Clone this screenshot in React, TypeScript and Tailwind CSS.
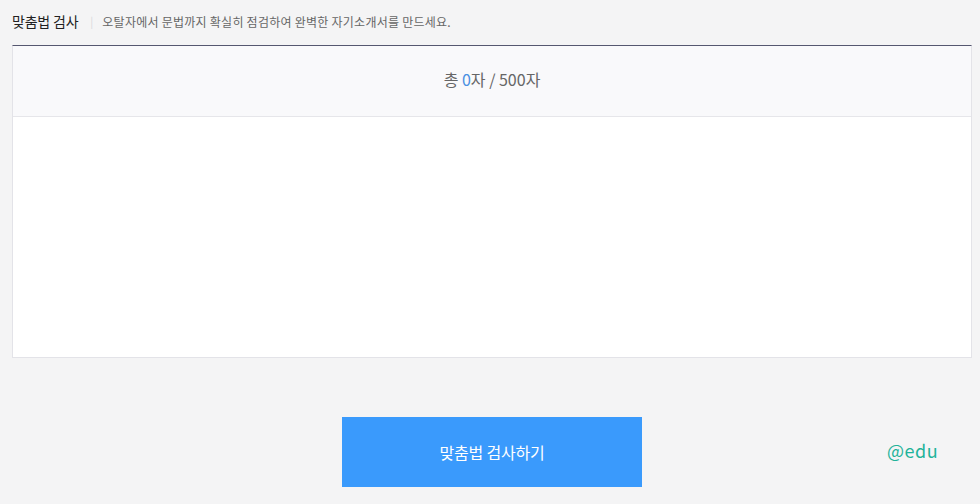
const font = { fontFamily: '"Noto Sans CJK KR", "Noto Sans", sans-serif' };

export default function App() {
  return (
    <div className="w-[980px] h-[504px] bg-[#f4f4f5] overflow-hidden" style={font}>
      {/* Title row */}
      <div className="flex items-center h-[45px] pl-[12px] pb-[2px]">
        <span className="text-[14px] text-[#222] tracking-[-0.2px]">맞춤법 검사</span>
        <span className="ml-[12px] mr-[9px] text-[11px] text-[#d8d8dc]">|</span>
        <span className="text-[12px] text-[#666] tracking-[0.25px]">
          오탈자에서 문법까지 확실히 점검하여 완벽한 자기소개서를 만드세요.
        </span>
      </div>

      {/* Editor box */}
      <div className="ml-[12px] w-[960px] border-t border-t-[#555770] border-x border-b border-x-[#e3e3e8] border-b-[#e3e3e8]">
        <div className="h-[71px] bg-[#f9f9fb] border-b border-[#e6e6ea] flex items-center justify-center">
          <span className="text-[16px] text-[#666] pb-[5px]">
            총 <span className="text-[#4a90e2]">0</span>자 / 500자
          </span>
        </div>
        <textarea className="block w-full h-[240px] bg-white resize-none outline-none p-4 text-[14px]" />
      </div>

      {/* Actions */}
      <div className="relative mt-[59px] flex justify-center pl-[4px]">
        <button className="w-[300px] h-[70px] bg-[#3a9afc] text-white text-[16px] tracking-[-0.2px]">
          맞춤법 검사하기
        </button>
        <span className="absolute left-[887px] top-[20px] text-[18px] text-[#1fb39a] tracking-[0.5px]">
          @edu
        </span>
      </div>
    </div>
  );
}
